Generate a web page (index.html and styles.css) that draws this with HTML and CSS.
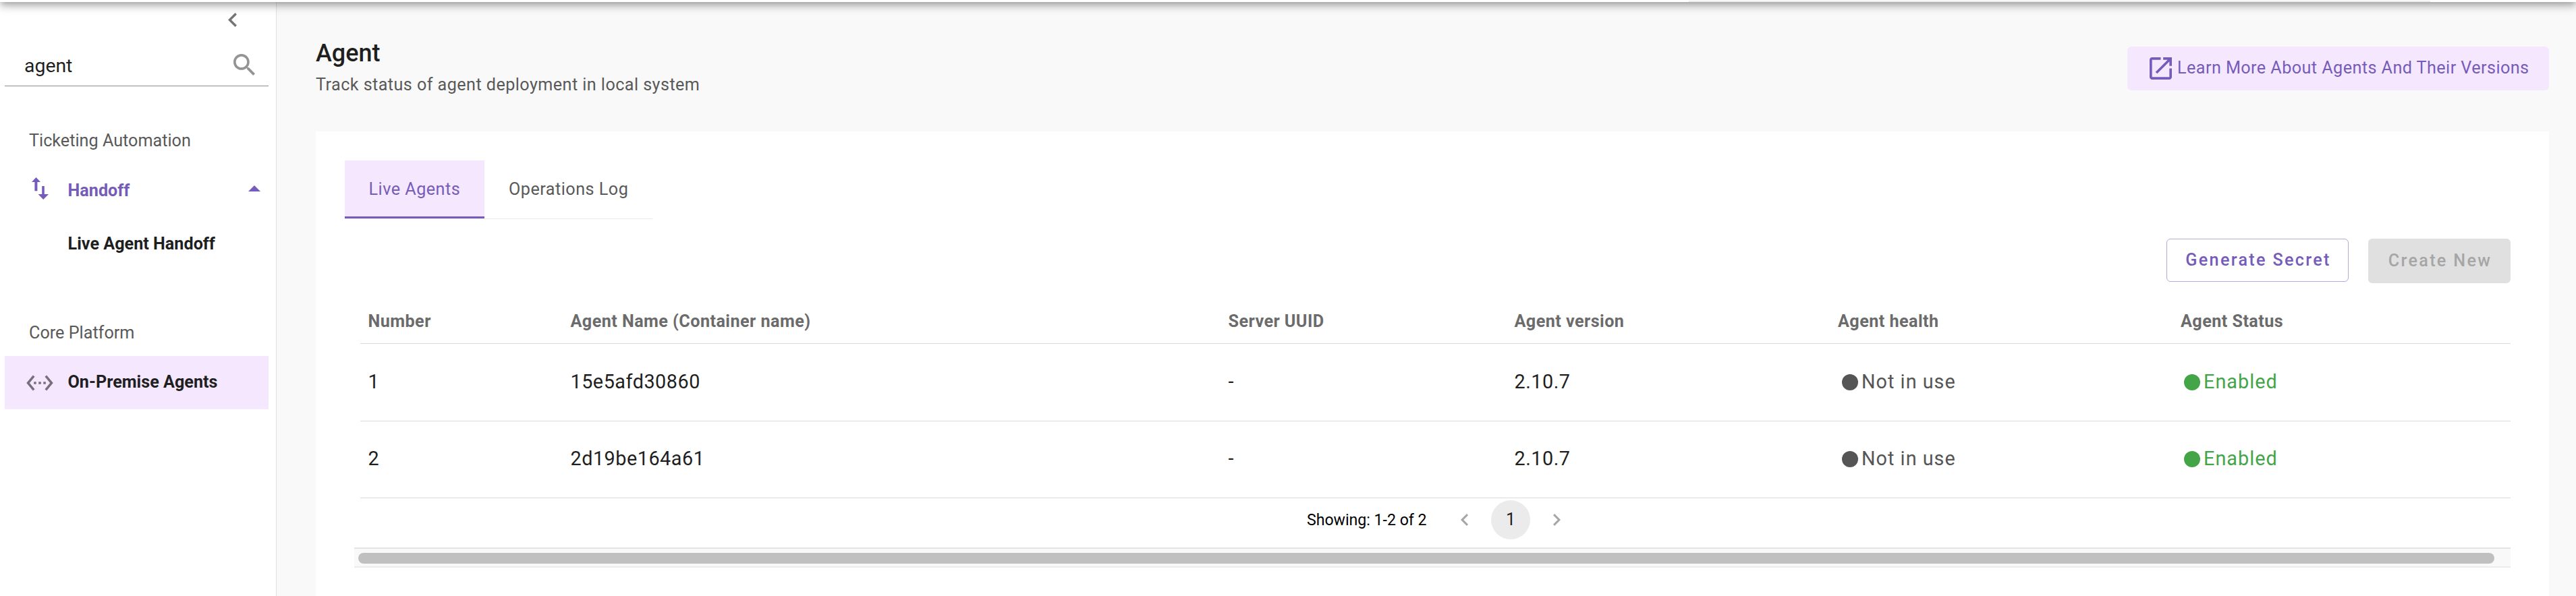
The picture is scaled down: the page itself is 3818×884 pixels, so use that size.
FILE: index.html
```html
<!DOCTYPE html>
<html lang="en">
<head>
<meta charset="utf-8">
<title>Agent</title>
<link rel="stylesheet" href="styles.css">
</head>
<body>
<header class="topbar"><div class="topbar-field"></div></header>
<div class="layout">
  <nav class="sidebar">
    <div class="collapse">
      <svg width="13" height="21" viewBox="8 6 7.41 12"><path fill="#757575" d="M15.41 7.41 14 6l-6 6 6 6 1.41-1.41L10.83 12z"/></svg>
    </div>
    <div class="search">
      <span>agent</span>
      <svg class="search-icon" width="32" height="32" viewBox="3 3 17.5 17.5"><path fill="#949494" d="M15.5 14h-.79l-.28-.27C15.41 12.59 16 11.11 16 9.5 16 5.91 13.09 3 9.5 3S3 5.91 3 9.5 5.91 16 9.5 16c1.61 0 3.09-.59 4.23-1.57l.27.28v.79l5 4.99L20.49 19l-4.99-5zm-6 0C7.01 14 5 11.99 5 9.5S7.01 5 9.5 5 14 7.01 14 9.5 11.99 14 9.5 14z"/></svg>
    </div>
    <div class="section">Ticketing Automation</div>
    <div class="item item-open">
      <span class="item-icon"><svg class="swap" width="25" height="33" viewBox="0 0 25 33"><path fill="#755cba" d="M6.5 0 13 7H8.4v13.3H4.4V7H0zM15.2 13h3.6v12H25l-7.8 8L9.6 25h5.6z"/></svg></span>
      <span>Handoff</span>
      <svg class="caret" width="18" height="9" viewBox="0 0 18 9"><path fill="#755cba" d="M9 0l9 9H0z"/></svg>
    </div>
    <div class="item sub">Live Agent Handoff</div>
    <div class="section section-core">Core Platform</div>
    <div class="item item-active">
      <span class="item-icon ether"><svg width="40" height="24" viewBox="0.68 5.2 22.64 13.6"><path fill="#77707c" d="M7.77 6.76 6.23 5.48.82 12l5.41 6.52 1.54-1.28L3.42 12l4.35-5.24zM7 13h2v-2H7v2zm10-2h-2v2h2v-2zm-6 2h2v-2h-2v2zm6.77-7.52-1.54 1.28L20.58 12l-4.35 5.24 1.54 1.28L23.18 12l-5.41-6.52z"/></svg></span>
      <span>On-Premise Agents</span>
    </div>
  </nav>
  <main class="main">
    <div class="page-head">
      <div class="titles">
        <h1>Agent</h1>
        <p>Track status of agent deployment in local system</p>
      </div>
      <a class="learn">
        <svg width="33" height="33" viewBox="3 3 18 18"><path fill="#755cba" d="M19 19H5V5h7V3H5c-1.11 0-2 .9-2 2v14c0 1.1.89 2 2 2h14c1.1 0 2-.9 2-2v-7h-2v7zM14 3v2h3.59l-9.83 9.83 1.41 1.41L19 6.41V10h2V3h-7z"/></svg>
        <span>Learn More About Agents And Their Versions</span>
      </a>
    </div>
    <section class="card">
      <div class="tabs"><div class="tab selected">Live Agents</div><div class="tab">Operations Log</div></div>
      <div class="actions">
        <button class="btn outlined">Generate Secret</button>
        <button class="btn disabled">Create New</button>
      </div>
      <div class="table">
        <div class="row head"><span>Number</span><span>Agent Name (Container name)</span><span>Server UUID</span><span>Agent version</span><span>Agent health</span><span>Agent Status</span></div>
        <div class="row first"><span>1</span><span>15e5afd30860</span><span>-</span><span>2.10.7</span><span class="state idle"><i></i>Not in use</span><span class="state on"><i></i>Enabled</span></div>
        <div class="row"><span>2</span><span>2d19be164a61</span><span>-</span><span>2.10.7</span><span class="state idle"><i></i>Not in use</span><span class="state on"><i></i>Enabled</span></div>
      </div>
      <div class="pager">
        <span class="showing">Showing: 1-2 of 2</span>
        <svg width="11" height="18" viewBox="8 6 7.41 12"><path fill="#a6a6a6" d="M15.41 7.41 14 6l-6 6 6 6 1.41-1.41L10.83 12z"/></svg>
        <span class="page">1</span>
        <svg width="11" height="18" viewBox="8.59 6 7.41 12"><path fill="#a6a6a6" d="M10 6 8.59 7.41 13.17 12l-4.58 4.59L10 18l6-6z"/></svg>
      </div>
      <div class="scrollbar"><div class="thumb"></div></div>
    </section>
  </main>
</div>
</body>
</html>
```
FILE: styles.css
```css
* { box-sizing: border-box; }
body {
  margin: 0;
  height: 884px;
  overflow: hidden;
  background: #f9f9f9;
  color: #1f1f1f;
  font-family: Roboto, "Liberation Sans", sans-serif;
  font-size: 25.2px;
}
svg { display: block; flex: none; }

.topbar {
  position: relative;
  z-index: 2;
  height: 3px;
  background: #fff;
}
/* the bar continues above the viewport, so its shadow is cast from a taller box */
.topbar::before {
  content: "";
  position: absolute;
  inset: -120px 0 0 0;
  background: #fff;
  box-shadow: 0 4px 8px -2px rgba(0, 0, 0, .2), 0 8px 10px 0 rgba(0, 0, 0, .14), 0 2px 20px 0 rgba(0, 0, 0, .12);
}
.topbar-field {
  position: absolute;
  left: 2503px;
  top: 1px;
  width: 1099px;
  height: 2px;
  background: #ededed;
}

.layout { display: flex; height: 881px; }
.sidebar {
  width: 410px;
  flex: none;
  background: #fff;
  border-right: 1px solid #e0e0e0;
  padding: 0 11px 0 7px;
}
.collapse { height: 64px; padding: 16px 0 0 331px; }
.search {
  display: flex;
  justify-content: space-between;
  height: 61px;
  line-height: 62px;
  padding: 0 20px 0 29px;
  border-bottom: 1px solid #8c8c8c;
  font-size: 28.4px;
}
.search-icon { margin-top: 13px; }
.section {
  height: 40px;
  line-height: 42px;
  margin-top: 60px;
  padding-left: 36px;
  color: #595959;
}
.section-core { margin-top: 72px; }
.item {
  display: flex;
  align-items: center;
  font-weight: 700;
}
.item-icon { width: 93.5px; padding-left: 40px; }
.ether { padding-left: 32px; }
.item-open { height: 78px; margin-top: 15px; color: #755cba; }
.swap { margin-bottom: 5px; }
.caret { margin: 0 12px 6px auto; }
.sub { height: 80px; padding-left: 93.5px; }
.item-active { height: 79px; margin-top: 15px; background: #f5e8fe; }
.item-active span:last-child { padding-bottom: 2px; }

.main { flex: 1; padding: 0 40px 0 58px; }
.page-head { display: flex; justify-content: space-between; height: 192px; }
.titles { padding-top: 56px; }
h1 { margin: 0; font-size: 36px; line-height: 40px; font-weight: 500; }
.titles p { margin: 9px 0 0; line-height: 36px; letter-spacing: .43px; color: #595959; }
.learn {
  display: flex;
  align-items: center;
  width: 625px;
  height: 65px;
  margin-top: 66px;
  padding-left: 33px;
  gap: 8px;
  border-radius: 6px;
  background: #f5e8fe;
  color: #755cba;
  letter-spacing: .43px;
  white-space: nowrap;
}
.learn span { padding-bottom: 2px; }

.card { height: 689px; padding: 43px 57px 0 43px; background: #fff; }
.tabs { display: flex; width: 456px; height: 87px; border-bottom: 1px solid #ebebeb; }
.tab {
  width: 249px;
  padding-left: 36px;
  line-height: 86px;
  letter-spacing: .48px;
  color: #595959;
}
.tab.selected {
  width: 207px;
  height: 86px;
  padding-left: 35.5px;
  border-bottom: 3px solid #755cba;
  background: #f5e8fe;
  color: #755cba;
}
.actions { display: flex; justify-content: flex-end; gap: 29px; height: 90px; padding-top: 29px; }
.btn {
  padding: 0 0 2px 2px;
  border: 0;
  border-radius: 6px;
  font: 500 25.2px Roboto, "Liberation Sans", sans-serif;
  letter-spacing: 2.3px;
}
.outlined { width: 270px; height: 64px; border: 1px solid #b5a8dc; background: #fff; color: #755cba; }
.disabled { width: 211px; height: 66px; padding-bottom: 1px; background: #e0e0e0; color: #a6a6a6; }

.table { margin-left: 23px; }
.row {
  display: grid;
  grid-template-columns: 300px 975px 424px 479.5px 508px 1fr;
  align-items: center;
  height: 114px;
  padding: 0 0 3px 11.5px;
  border-bottom: 1px solid #dbdbdb;
  font-size: 28.8px;
  letter-spacing: .5px;
}
.row.first { height: 115px; padding-bottom: 2px; }
.row.head {
  height: 95px;
  padding: 29px 0 0 11.5px;
  font-size: 25.2px;
  font-weight: 700;
  letter-spacing: .44px;
  color: #6b6b6b;
}
.state { display: flex; align-items: center; gap: 5px; padding-left: 6px; letter-spacing: 1.02px; }
.state i { width: 24px; height: 24px; border-radius: 50%; background: currentColor; margin-top: 2px; }
.idle { color: #555; }
.on { padding-left: 5px; color: #43a547; }

.pager {
  display: flex;
  align-items: center;
  gap: 34px;
  height: 73px;
  padding: 0 0 9px 1425px;
  color: #000;
}
.showing { width: 195px; padding-left: 1px; font-size: 23.1px; white-space: nowrap; }
.page {
  width: 58px;
  height: 58px;
  border-radius: 50%;
  background: #ebebeb;
  line-height: 57px;
  text-align: center;
  color: #1f1f1f;
}
.scrollbar {
  height: 30px;
  margin-left: 14px;
  padding: 6px 24px 0 6px;
  border-top: 2px solid #e3e3e3;
  border-bottom: 2px solid #ebebeb;
  background: #f9f9f9;
}
.thumb { height: 16px; border-radius: 8px; background: #c0c0c0; }
```
